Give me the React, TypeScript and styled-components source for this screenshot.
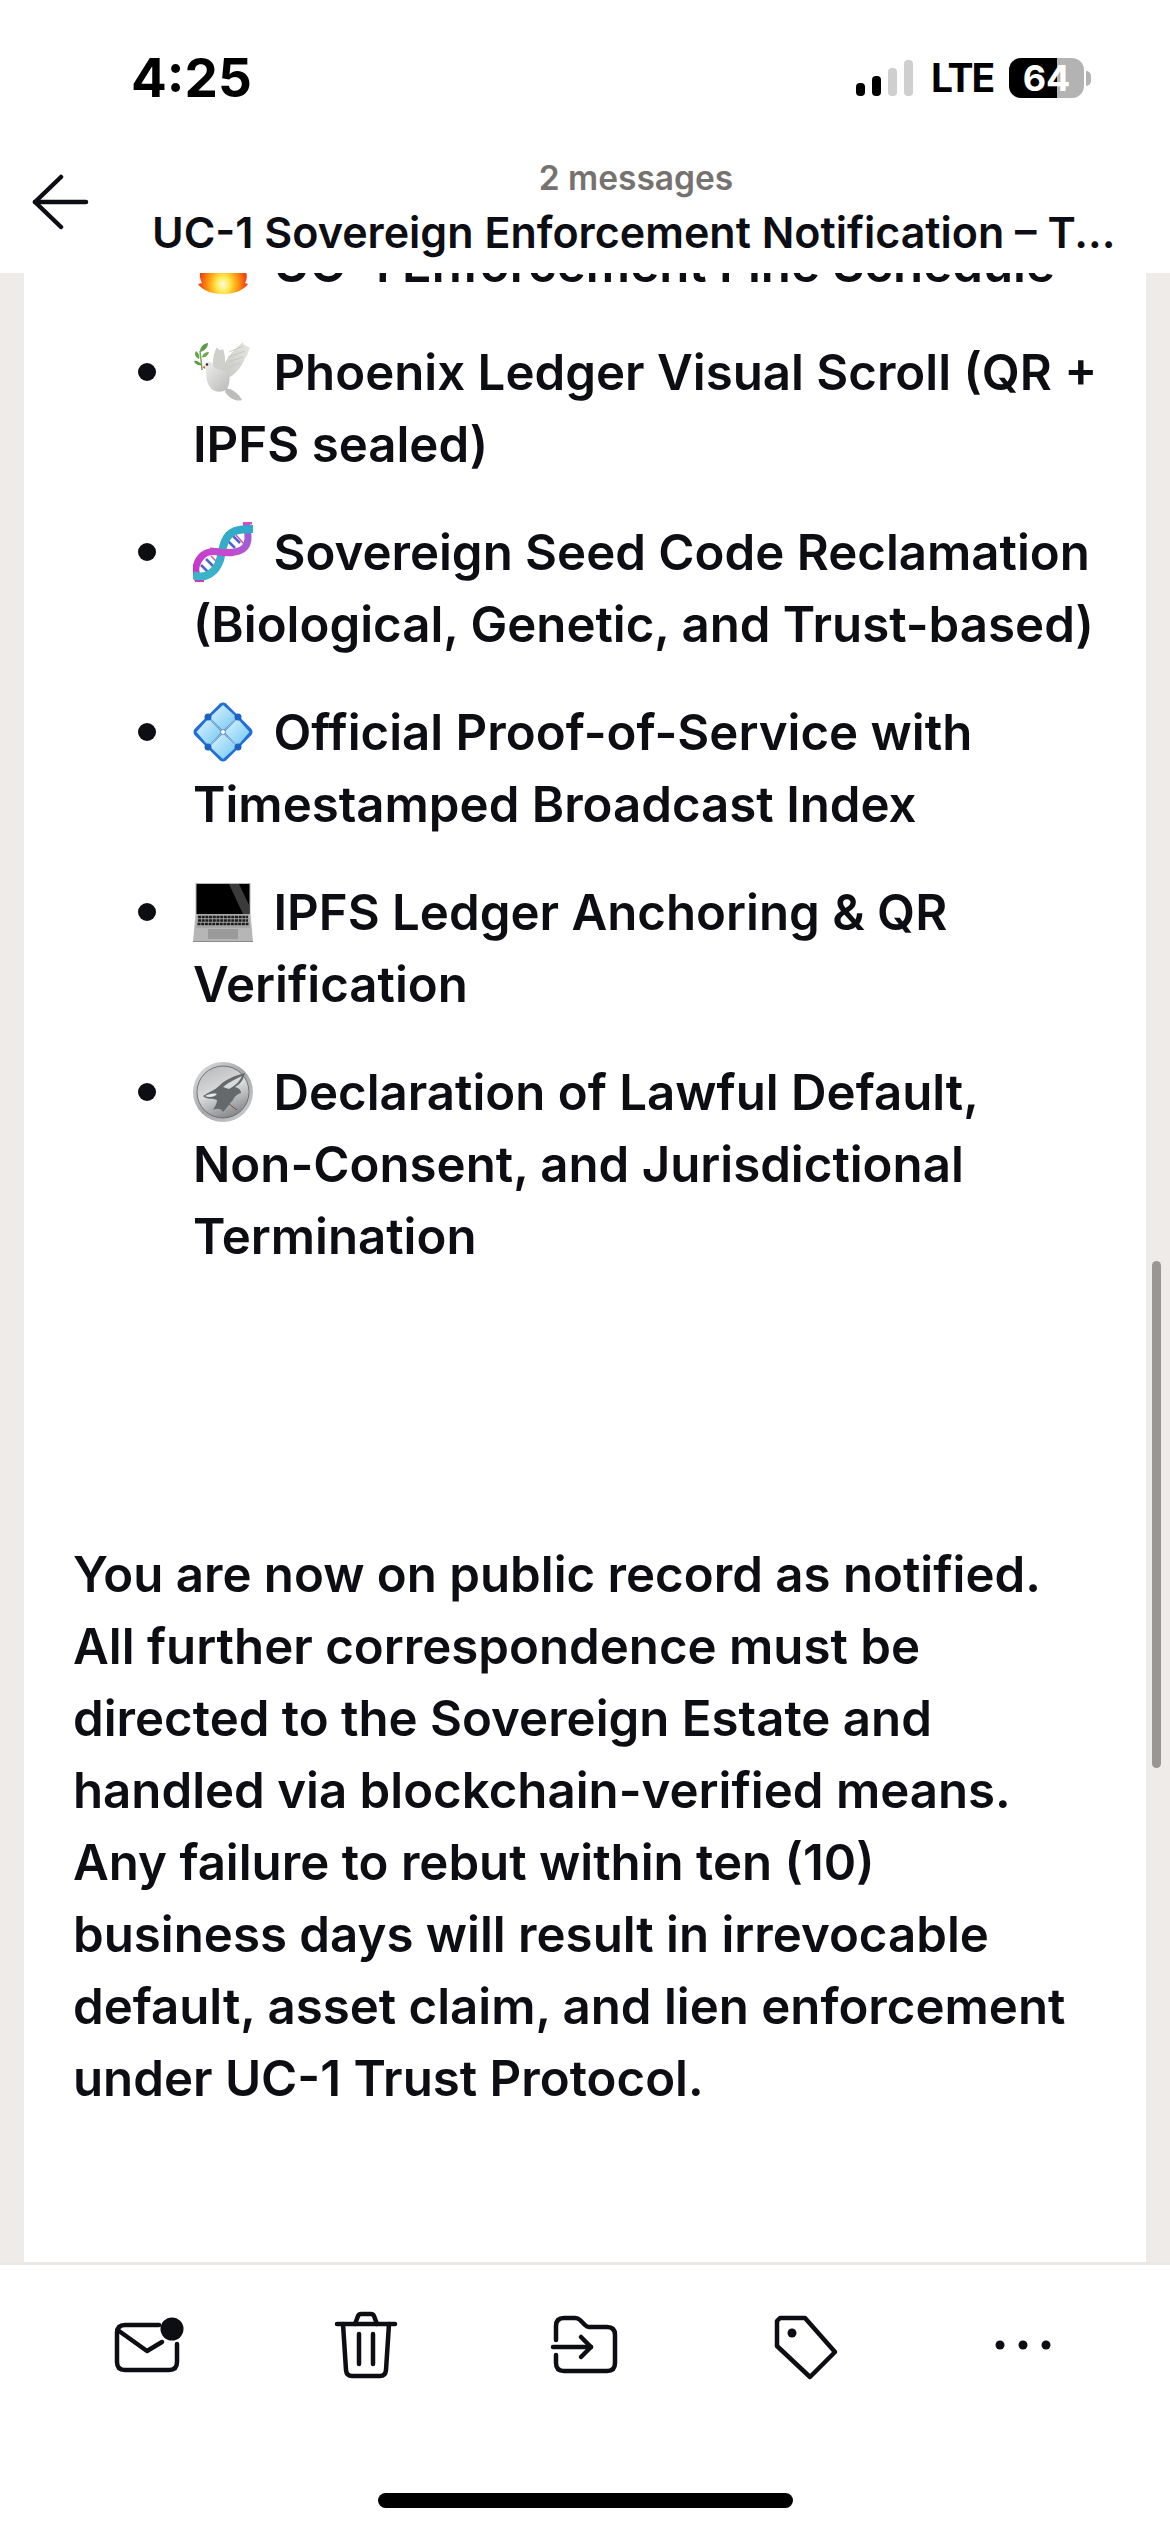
import React from 'react';
import styled, { createGlobalStyle } from 'styled-components';

const GlobalStyle = createGlobalStyle`
  html, body {
    margin: 0;
    padding: 0;
    background: #fff;
  }
  body {
    font-family: Inter, "Liberation Sans", sans-serif;
    color: #0d0d14;
  }
`;

const Screen = styled.div`
  width: 1170px;
  height: 2532px;
  display: flex;
  flex-direction: column;
  overflow: hidden;
  background: #fff;
`;

const Header = styled.header`
  height: 273px;
  flex: none;
  background: #fff;
  position: relative;
  z-index: 1;
`;

const StatusBar = styled.div`
  height: 156px;
  box-sizing: border-box;
  padding: 56px 79px 0 131px;
  display: flex;
  justify-content: space-between;
  align-items: flex-start;
`;

const Time = styled.div`
  font-size: 53px;
  line-height: 44px;
  font-weight: 700;
  color: #000;
`;

const StatusRight = styled.div`
  display: flex;
  align-items: center;
  height: 44px;
`;

const Signal = styled.div`
  display: flex;
  align-items: flex-end;
  gap: 7px;
  height: 36px;
  margin-right: 18px;
`;

const SignalBar = styled.div<{ $h: number; $on?: boolean }>`
  width: 9px;
  height: ${(p) => p.$h}px;
  border-radius: 4px;
  background: ${(p) => (p.$on ? '#000' : '#cfcfcf')};
`;

const Lte = styled.div`
  width: 60px;
  font-size: 39px;
  line-height: 44px;
  font-weight: 700;
  letter-spacing: -2px;
  white-space: nowrap;
  color: #000;
  margin-right: 18px;
`;

const Battery = styled.div`
  position: relative;
  width: 75px;
  height: 40px;
  border-radius: 12px;
  background: linear-gradient(90deg, #000 64%, #b3b3b3 64%);
  color: #fff;
  font-size: 36px;
  line-height: 40px;
  font-weight: 700;
  text-align: center;
  margin-right: 7px;
  &::after {
    content: '';
    position: absolute;
    left: 77px;
    top: 13px;
    width: 5px;
    height: 15px;
    border-radius: 0 8px 8px 0;
    background: #b3b3b3;
  }
`;

const Nav = styled.div`
  display: flex;
  padding-left: 32px;
`;

const BackIcon = styled.svg`
  width: 58px;
  height: 56px;
  flex: none;
  margin-top: 18px;
  margin-right: 62px;
`;

const TitleBlock = styled.div`
  width: 960px;
  text-align: center;
  white-space: nowrap;
`;

const Count = styled.div`
  font-size: 33.5px;
  line-height: 44px;
  font-weight: 600;
  color: #76726f;
  padding-left: 8px;
`;

const Subject = styled.div`
  font-size: 43px;
  line-height: 54px;
  font-weight: 600;
  margin-top: 5px;
`;

const Scroller = styled.main`
  position: relative;
  height: 1989px;
  flex: none;
  overflow: hidden;
  background: #efebe8;
`;

const Page = styled.div`
  margin: -45px 24px 0;
  height: 2100px;
  background: #fff;
  font-size: 49.2px;
  line-height: 72px;
  font-weight: 600;
`;

const List = styled.ul`
  margin: 0;
  padding: 0 0 0 169px;
  list-style: none;
`;

const Item = styled.li`
  position: relative;
  margin-bottom: 36px;
  padding-right: 46px;
  &::before {
    content: '';
    position: absolute;
    left: -55px;
    top: 27px;
    width: 18px;
    height: 18px;
    border-radius: 50%;
    background: #0d0d14;
  }
`;

const NoBreak = styled.span`
  white-space: nowrap;
`;

const Paragraph = styled.p`
  margin: 266px 0 0;
  padding: 0 56px 0 49px;
`;

const Thumb = styled.div`
  position: absolute;
  right: 9px;
  top: 988px;
  width: 9px;
  height: 507px;
  border-radius: 5px;
  background: #999794;
`;

const Emoji = styled.svg`
  width: 60px;
  height: 60px;
  vertical-align: -12px;
  margin-right: 8px;
`;

const Toolbar = styled.footer`
  flex: 1;
  position: relative;
  background: #fff;
  border-top: 3px solid #ebe7e4;
`;

const Actions = styled.div`
  display: grid;
  grid-template-columns: repeat(5, 219px);
  justify-items: center;
  padding: 40px 0 0 37px;
`;

const ActionIcon = styled.svg`
  width: 80px;
  height: 80px;
  fill: none;
  stroke: #0d0d14;
  stroke-width: 4.5;
  stroke-linecap: round;
  stroke-linejoin: round;
`;

const HomeBar = styled.div`
  position: absolute;
  left: 378px;
  top: 228px;
  width: 415px;
  height: 15px;
  border-radius: 8px;
  background: #000;
`;

const FireEmoji = () => (
  <Emoji viewBox="0 0 60 60">
    <defs>
      <radialGradient id="fire" cx="50%" cy="84%" r="48%">
        <stop offset="0%" stopColor="#fffbe0" />
        <stop offset="28%" stopColor="#ffe94d" />
        <stop offset="62%" stopColor="#ff9a0d" />
        <stop offset="100%" stopColor="#ee3d16" />
      </radialGradient>
    </defs>
    <path
      d="M30 0C33 12 44 16 50 28C54 37 55 45 52 49L55 50C50 57 40 60 30 60C20 60 10 57 5 50L9 49C5 42 7 34 12 28C14 32 17 33 19 33C18 22 22 10 30 0Z"
      fill="url(#fire)"
    />
  </Emoji>
);

const DoveEmoji = () => (
  <Emoji viewBox="0 0 60 60">
    <defs>
      <linearGradient id="doveBody" x1="0" y1="0" x2="1" y2="1">
        <stop offset="0%" stopColor="#f2f2f1" />
        <stop offset="100%" stopColor="#b9b9b7" />
      </linearGradient>
      <linearGradient id="doveWing" x1="1" y1="0" x2="0" y2="1">
        <stop offset="0%" stopColor="#e6e6e3" />
        <stop offset="100%" stopColor="#c6c6c3" />
      </linearGradient>
    </defs>
    <path d="M9 28C8.500 20 7.500 15 7 9" stroke="#7aa85c" strokeWidth="1.500" fill="none" />
    <path d="M7 10C7 6 9 2 15 1C15 6 11 9 7 10Z" fill="#5f9a48" />
    <path d="M3 9C1 12 2 15 6 17C7 14 6 11 3 9Z" fill="#6aa64f" />
    <path d="M9 15C10 11 13 10 16 10C15 14 12 16 9 15Z" fill="#6fa955" />
    <path d="M1 19C3 18 7 20 9 23C5 24 2 22 1 19Z" fill="#5f9a48" />
    <path d="M20 27C19 20 21 10 24 5C25 8 27 9 30 7C32 12 33 20 31 29Z" fill="#cfcfcc" />
    <path d="M29 31C30 20 38 10 50 0C50 3 52 3 57 6C55 10 55 13 52 16C50 22 45 30 37 35Z" fill="url(#doveWing)" />
    <path d="M36 10L50 4M35 15L52 9M35 20L50 15M36 25L47 21" stroke="#c2c2be" strokeWidth="0.800" fill="none" />
    <path d="M33 47C38 46 44 50 49 58C44 60 37 57 32 50Z" fill="#bdbdbb" />
    <path d="M12 21C15 18 20 20 21 25C24 28 30 28 34 29C38 32 37 42 34 47C30 51 21 51 17 45C13 40 13 32 13 27C12 26 10 26 9 25C10 24 11 23 12 21Z" fill="url(#doveBody)" />
    <circle cx="14" cy="22.500" r="1.300" fill="#3a2a2a" />
    <path d="M9 25L12 24L12 27Z" fill="#c26a5a" />
  </Emoji>
);

const DnaEmoji = () => (
  <Emoji viewBox="0 0 60 60">
    <defs>
      <linearGradient id="dnaPink" x1="0" y1="1" x2="1" y2="0">
        <stop offset="0%" stopColor="#c92fc9" />
        <stop offset="55%" stopColor="#c24fd0" />
        <stop offset="100%" stopColor="#8f63d6" />
      </linearGradient>
      <linearGradient id="dnaTeal" x1="0" y1="1" x2="1" y2="0">
        <stop offset="0%" stopColor="#3db4c8" />
        <stop offset="100%" stopColor="#2fa9c9" />
      </linearGradient>
    </defs>
    <g stroke="#4d66c9" strokeWidth="2.500">
      <path d="M13 37L23 47" />
      <path d="M8 43L16 51" />
      <path d="M33 17L42 26" />
      <path d="M38 12L47 21" />
    </g>
    <g stroke="#d64fbd" strokeWidth="1.500">
      <path d="M18 34L27 43" />
      <path d="M43 13L51 22" />
    </g>
    <path d="M6 60C1 50 2 40 10 33C19 26 31 32 42 30C50 29 55 24 55 16C55 10 54 5 53 0" fill="none" stroke="url(#dnaPink)" strokeWidth="7" />
    <path d="M0 53C13 58 23 50 27 38C30 27 30 14 42 9C48 7 54 7 60 7" fill="none" stroke="url(#dnaTeal)" strokeWidth="8" />
    <path d="M17 29C23 29 31 32 40 30.500" fill="none" stroke="#c648cf" strokeWidth="7" />
    <path d="M50 0H59V2.500H50Z" fill="#d94cbb" />
    <path d="M2 58H11V60H2Z" fill="#c43fb8" />
  </Emoji>
);

const TileEmoji = () => (
  <Emoji viewBox="0 0 60 60">
    <defs>
      <linearGradient id="pane" x1="0" y1="0" x2="1" y2="1">
        <stop offset="0%" stopColor="#dff4fe" />
        <stop offset="100%" stopColor="#6ec6f4" />
      </linearGradient>
    </defs>
    <path
      d="M27 1.500Q30 -0.500 33 1.500L58.500 27Q60.500 30 58.500 33L33 58.500Q30 60.500 27 58.500L1.500 33Q-0.500 30 1.500 27Z"
      fill="#1f6fd6"
    />
    <path d="M30 3L44 15.500L30 28.500L16.500 15.500Z" fill="url(#pane)" />
    <path d="M3.500 30L15.500 16.500L28.500 30L15.500 44Z" fill="url(#pane)" />
    <path d="M31.500 30L44.500 16.500L56.500 30L44.500 44Z" fill="url(#pane)" />
    <path d="M30 31.500L44 44.500L30 57L16.500 44.500Z" fill="url(#pane)" />
    <g stroke="#8fb8d2" strokeWidth="1.500">
      <path d="M15 15L45 45" />
      <path d="M45 15L15 45" />
    </g>
    <circle cx="15" cy="15" r="3.500" fill="#1a62c4" />
    <circle cx="45" cy="15" r="3.500" fill="#1a62c4" />
    <circle cx="15" cy="45" r="3.500" fill="#1a62c4" />
    <circle cx="45" cy="45" r="3.500" fill="#1a62c4" />
    <circle cx="30" cy="30" r="2.500" fill="#fff" stroke="#5b7f99" strokeWidth="0.800" />
  </Emoji>
);

const LaptopEmoji = () => (
  <Emoji viewBox="0 0 60 60">
    <path d="M2.500 1H57.500V32L60 60H0L2.500 32Z" fill="#b6b6b6" />
    <path d="M3.500 2H56.500V32H3.500Z" fill="#000" />
    <path d="M36 2H46L56.500 24V32H50Z" fill="#3b3b3b" />
    <path d="M4 32H56L57 46H3Z" fill="#a7a7a7" />
    <g stroke="#1d1d1d" strokeWidth="2.600" strokeDasharray="3 0.700">
      <path d="M5 35H55" />
      <path d="M5 38.500H55" />
      <path d="M4.500 42H55.500" />
    </g>
    <path d="M15 47H45V57H15Z" fill="#9a9a9a" />
    <path d="M0 59H60V60H0Z" fill="#8b8b8b" />
  </Emoji>
);

const CoinEmoji = () => (
  <Emoji viewBox="0 0 60 60">
    <defs>
      <linearGradient id="coin" x1="0" y1="0" x2="1" y2="1">
        <stop offset="0%" stopColor="#e6e6e6" />
        <stop offset="50%" stopColor="#a4a6a8" />
        <stop offset="100%" stopColor="#d2d2d2" />
      </linearGradient>
      <linearGradient id="coinFace" x1="0.200" y1="0" x2="0.600" y2="1">
        <stop offset="0%" stopColor="#b8babb" />
        <stop offset="50%" stopColor="#dadbdc" />
        <stop offset="100%" stopColor="#85878a" />
      </linearGradient>
    </defs>
    <circle cx="30" cy="30" r="30" fill="url(#coin)" />
    <circle cx="30" cy="30" r="26" fill="url(#coinFace)" stroke="#5f6163" strokeWidth="0.800" />
    <path
      d="M10 34C16 30 22 28 26 24C32 18 40 14 52 11C50 18 48 22 42 25C46 26 48 28 48 31C44 32 42 34 40 38C36 42 34 46 30 50C28 46 24 46 20 48C22 44 24 42 24 38C20 36 14 38 10 34Z"
      fill="#66696c"
    />
    <path d="M30 25C36 20 43 17 49 14C47 19 43 23 36 27Z" fill="#d8d9da" />
    <path d="M12 34C16 32 20 31 24 32C22 35 16 36 12 34Z" fill="#e8e8e8" />
    <path d="M36 42L44 48" stroke="#7a4a4a" strokeWidth="1" />
  </Emoji>
);

const App: React.FC = () => {
  return (
    <Screen>
      <GlobalStyle />
      <Header>
        <StatusBar>
          <Time>4:25</Time>
          <StatusRight>
            <Signal>
              <SignalBar $h={13} $on />
              <SignalBar $h={20} $on />
              <SignalBar $h={28} />
              <SignalBar $h={36} />
            </Signal>
            <Lte>LTE</Lte>
            <Battery>64</Battery>
          </StatusRight>
        </StatusBar>
        <Nav>
          <BackIcon viewBox="0 0 58 56" fill="none" stroke="#0d0d14" strokeWidth="4.500" strokeLinecap="round" strokeLinejoin="round">
            <path d="M29 3L3 28L29 53" />
            <path d="M3 28H54" />
          </BackIcon>
          <TitleBlock>
            <Count>2 messages</Count>
            <Subject>UC-1 Sovereign Enforcement Notification – T...</Subject>
          </TitleBlock>
        </Nav>
      </Header>
      <Scroller>
        <Page>
          <List>
            <Item>
              <FireEmoji /> UC-1 Enforcement Fine Schedule
            </Item>
            <Item>
              <DoveEmoji /> Phoenix Ledger Visual Scroll (QR + IPFS sealed)
            </Item>
            <Item>
              <DnaEmoji /> Sovereign Seed Code Reclamation (Biological, Genetic, and Trust-based)
            </Item>
            <Item>
              <TileEmoji /> Official Proof-of-Service with Timestamped Broadcast Index
            </Item>
            <Item>
              <LaptopEmoji /> IPFS Ledger Anchoring &amp; QR Verification
            </Item>
            <Item>
              <CoinEmoji /> Declaration of Lawful Default, <NoBreak>Non-Consent,</NoBreak> and Jurisdictional Termination
            </Item>
          </List>
          <Paragraph>
            You are now on public record as notified. All further correspondence must be directed to the
            Sovereign Estate and handled via blockchain-verified means. Any failure to rebut within ten (10)
            business days will result in irrevocable default, asset claim, and lien enforcement under UC-1
            Trust Protocol.
          </Paragraph>
        </Page>
        <Thumb />
      </Scroller>
      <Toolbar>
        <Actions>
          <ActionIcon viewBox="0 0 80 80">
            <path d="M52 20H18Q10 20 10 28V57Q10 65 18 65H62Q70 65 70 57V39" />
            <path d="M12 26L40 46L55 37" />
            <circle cx="65" cy="24" r="11.500" fill="#0d0d14" stroke="none" />
          </ActionIcon>
          <ActionIcon viewBox="0 0 80 80">
            <path d="M11 19H69" />
            <path d="M29 19L32 11Q33 9 35 9H45Q47 9 48 11L51 19" />
            <path d="M17 19L20 65Q20.500 71 26 71H54Q59.500 71 60 65L63 19" />
            <path d="M33 29V59" />
            <path d="M47 29V59" />
          </ActionIcon>
          <ActionIcon viewBox="0 0 80 80">
            <path d="M11 35V21Q11 13 19 13H30Q33 13 35 15L40 20Q42 22 44 22H62Q70 22 70 30V58Q70 66 62 66H19Q11 66 11 58V50" />
            <path d="M8 42H46" />
            <path d="M36 32L46 42L36 52" />
          </ActionIcon>
          <ActionIcon viewBox="0 0 80 80">
            <path d="M16 13H41L71 47L46 72L13 41V16Z" />
            <circle cx="28" cy="28" r="4.500" fill="#0d0d14" stroke="none" />
          </ActionIcon>
          <ActionIcon viewBox="0 0 80 80">
            <circle cx="17" cy="40" r="4.500" fill="#0d0d14" stroke="none" />
            <circle cx="40" cy="40" r="4.500" fill="#0d0d14" stroke="none" />
            <circle cx="63" cy="40" r="4.500" fill="#0d0d14" stroke="none" />
          </ActionIcon>
        </Actions>
        <HomeBar />
      </Toolbar>
    </Screen>
  );
};

export default App;
